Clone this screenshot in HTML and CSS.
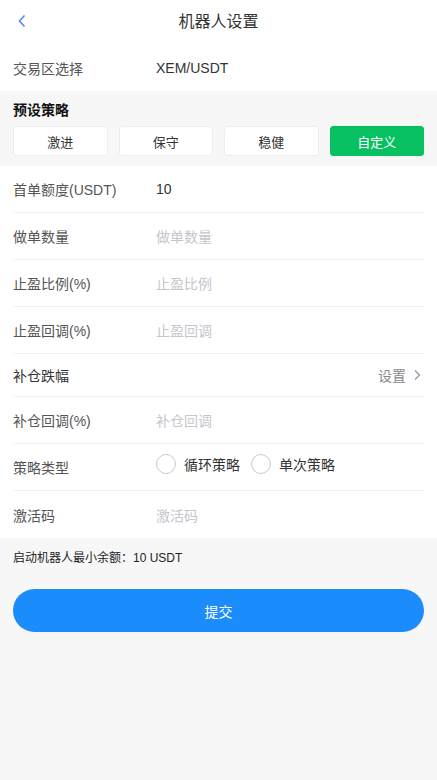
FILE: index.html
```html
<!DOCTYPE html>
<html lang="zh-CN">
<head>
  <meta charset="utf-8">
  <meta name="viewport" content="width=device-width, initial-scale=1.0">
  <title>机器人设置</title>
  <link rel="stylesheet" href="styles.css">
</head>
<body>
  <div class="top">
    <div class="nav-bar">
      <span class="nav-back">
        <svg width="10" height="14" viewBox="0 0 10 14"><path d="M7.5 1.5L2.5 7l5 5.5" fill="none" stroke="#4a8af4" stroke-width="1.5"/></svg>
      </span>
      <span class="nav-title">机器人设置</span>
    </div>
    <div class="form-row no-line">
      <span class="form-label">交易区选择</span>
      <span class="form-value">XEM/USDT</span>
    </div>
  </div>

  <div class="preset">
    <div class="preset-title">预设策略</div>
    <div class="preset-group">
      <button class="preset-btn">激进</button>
      <button class="preset-btn">保守</button>
      <button class="preset-btn">稳健</button>
      <button class="preset-btn active">自定义</button>
    </div>
  </div>

  <div class="form">
    <div class="form-row">
      <span class="form-label">首单额度(USDT)</span>
      <span class="form-value">10</span>
    </div>
    <div class="form-row">
      <span class="form-label">做单数量</span>
      <span class="form-placeholder">做单数量</span>
    </div>
    <div class="form-row">
      <span class="form-label">止盈比例(%)</span>
      <span class="form-placeholder">止盈比例</span>
    </div>
    <div class="form-row">
      <span class="form-label">止盈回调(%)</span>
      <span class="form-placeholder">止盈回调</span>
    </div>
    <div class="form-row short">
      <span class="form-label dark">补仓跌幅</span>
      <span class="form-link">设置
        <svg width="8" height="12" viewBox="0 0 8 12"><path d="M2 1.5L6.5 6 2 10.5" fill="none" stroke="#999" stroke-width="1.3"/></svg>
      </span>
    </div>
    <div class="form-row">
      <span class="form-label">补仓回调(%)</span>
      <span class="form-placeholder">补仓回调</span>
    </div>
    <div class="form-row">
      <span class="form-label">策略类型</span>
      <div class="radio-group">
        <label class="radio"><span class="radio-dot"></span>循环策略</label>
        <label class="radio"><span class="radio-dot"></span>单次策略</label>
      </div>
    </div>
    <div class="form-row no-line">
      <span class="form-label">激活码</span>
      <span class="form-placeholder">激活码</span>
    </div>
  </div>

  <div class="note">启动机器人最小余额：10 USDT</div>

  <div class="submit-wrap">
    <button class="submit-btn">提交</button>
  </div>
</body>
</html>
```

FILE: styles.css
```css
body {
  margin: 0;
  background: #f7f7f7;
  font-family: "Liberation Sans", "Noto Sans CJK SC", sans-serif;
  color: #333;
}

.top {
  background: #fff;
}

.nav-bar {
  height: 44px;
  display: flex;
  align-items: center;
  justify-content: center;
  position: relative;
}

.nav-back {
  position: absolute;
  left: 17px;
  top: 14px;
  display: flex;
}

.nav-title {
  font-size: 16px;
  color: #333;
  margin-top: -4px;
}

.preset {
  padding: 9px 13px 10px;
}

.preset-title {
  font-size: 14px;
  font-weight: bold;
  color: #111;
  line-height: 20px;
  margin-bottom: 6px;
}

.preset-group {
  display: flex;
  gap: 11px;
}

.preset-btn {
  flex: 1;
  height: 30px;
  background: #fff;
  border: 1px solid #eeeeee;
  border-radius: 3px;
  font-family: inherit;
  font-size: 13px;
  color: #333;
  padding: 0;
}

.preset-btn.active {
  background: #07c160;
  border-color: #07c160;
  color: #fff;
}

.form {
  background: #fff;
  padding: 0 13px;
}

.top .form-row {
  margin: 0 13px;
  height: 46px;
}

.form-row {
  height: 46px;
  display: flex;
  align-items: center;
  border-bottom: 1px solid #f2f2f2;
  font-size: 14px;
}

.form-row.short {
  height: 42px;
}

.form-row.no-line {
  border-bottom: none;
  height: 47px;
}

.form-label {
  width: 143px;
  color: #555;
  flex-shrink: 0;
}

.form-label.dark {
  color: #333;
}

.form-value {
  color: #333;
}

.form-placeholder {
  color: #c4c6cc;
}

.form-link {
  margin-left: auto;
  color: #888;
  display: flex;
  align-items: center;
  gap: 7px;
  padding-right: 3px;
}

.radio-group {
  display: flex;
  gap: 11px;
  margin-top: -6px;
}

.radio {
  display: flex;
  align-items: center;
  gap: 8px;
  color: #333;
}

.radio-dot {
  width: 18px;
  height: 18px;
  border: 1px solid #c8c9cc;
  border-radius: 50%;
  box-sizing: content-box;
}

.note {
  font-size: 12px;
  color: #222;
  padding: 13px 13px 0;
  line-height: 14px;
}

.submit-wrap {
  padding: 24px 13px;
}

.submit-btn {
  width: 100%;
  height: 43px;
  border: none;
  border-radius: 22px;
  background: #1b8cfc;
  color: #fff;
  font-family: inherit;
  font-size: 14px;
}
```
